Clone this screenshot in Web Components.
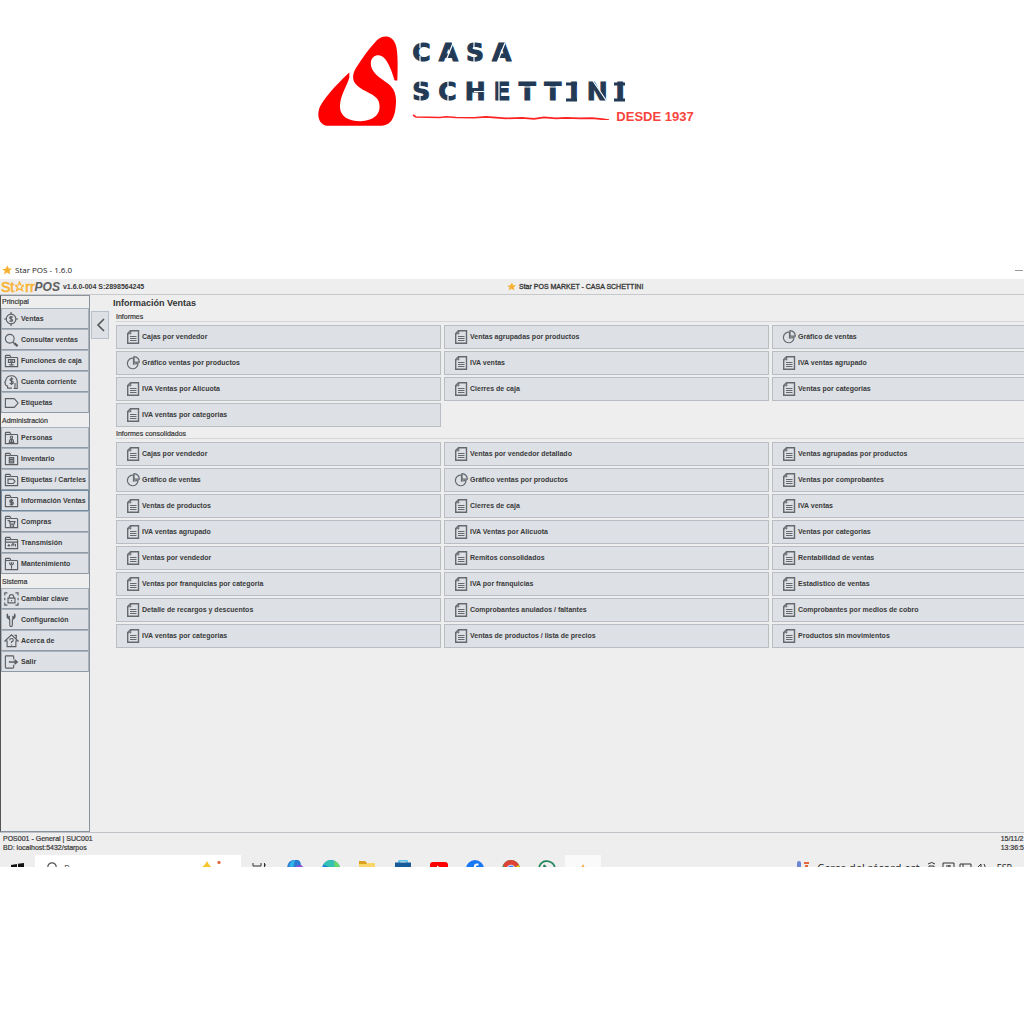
<!DOCTYPE html>
<html lang="es">
<head>
<meta charset="utf-8">
<title>Casa Schettini - Star POS</title>
<style>
html,body{margin:0;background:#fff;color:#3a3a3a;font:700 7px/10px "Liberation Sans",Arial,sans-serif}
body{overflow-x:hidden}
</style>
</head>
<body>
<brand-header></brand-header>
<pos-window>
  <pos-sidebar slot="side">
    <side-group label="Principal">
      <side-item icon="sale">Ventas</side-item>
      <side-item icon="search">Consultar ventas</side-item>
      <side-item icon="cash">Funciones de caja</side-item>
      <side-item icon="account">Cuenta corriente</side-item>
      <side-item icon="tag">Etiquetas</side-item>
    </side-group>
    <side-group label="Administración">
      <side-item icon="person">Personas</side-item>
      <side-item icon="stock">Inventario</side-item>
      <side-item icon="label">Etiquetas / Carteles</side-item>
      <side-item icon="money" current>Información Ventas</side-item>
      <side-item icon="cart">Compras</side-item>
      <side-item icon="send">Transmisión</side-item>
      <side-item icon="tool">Mantenimiento</side-item>
    </side-group>
    <side-group label="Sistema">
      <side-item icon="lock">Cambiar clave</side-item>
      <side-item icon="wrench">Configuración</side-item>
      <side-item icon="about">Acerca de</side-item>
      <side-item icon="exit">Salir</side-item>
    </side-group>
  </pos-sidebar>
  <report-group label="Informes">
    <report-tile>Cajas por vendedor</report-tile>
    <report-tile>Ventas agrupadas por productos</report-tile>
    <report-tile icon="pie">Gráfico de ventas</report-tile>
    <report-tile icon="pie">Gráfico ventas por productos</report-tile>
    <report-tile>IVA ventas</report-tile>
    <report-tile>IVA ventas agrupado</report-tile>
    <report-tile>IVA Ventas por Alicuota</report-tile>
    <report-tile>Cierres de caja</report-tile>
    <report-tile>Ventas por categorias</report-tile>
    <report-tile>IVA ventas por categorias</report-tile>
  </report-group>
  <report-group label="Informes consolidados">
    <report-tile>Cajas por vendedor</report-tile>
    <report-tile>Ventas por vendedor detallado</report-tile>
    <report-tile>Ventas agrupadas por productos</report-tile>
    <report-tile icon="pie">Gráfico de ventas</report-tile>
    <report-tile icon="pie">Gráfico ventas por productos</report-tile>
    <report-tile>Ventas por comprobantes</report-tile>
    <report-tile>Ventas de productos</report-tile>
    <report-tile>Cierres de caja</report-tile>
    <report-tile>IVA ventas</report-tile>
    <report-tile>IVA ventas agrupado</report-tile>
    <report-tile>IVA Ventas por Alicuota</report-tile>
    <report-tile>Ventas por categorias</report-tile>
    <report-tile>Ventas por vendedor</report-tile>
    <report-tile>Remitos consolidados</report-tile>
    <report-tile>Rentabilidad de ventas</report-tile>
    <report-tile>Ventas por franquicias por categoria</report-tile>
    <report-tile>IVA por franquicias</report-tile>
    <report-tile>Estadistico de ventas</report-tile>
    <report-tile>Detalle de recargos y descuentos</report-tile>
    <report-tile>Comprobantes anulados / faltantes</report-tile>
    <report-tile>Comprobantes por medios de cobro</report-tile>
    <report-tile>IVA ventas por categorias</report-tile>
    <report-tile>Ventas de productos / lista de precios</report-tile>
    <report-tile>Productos sin movimientos</report-tile>
  </report-group>
</pos-window>
<task-bar></task-bar>

<script>
const STAR = '<svg class="star" viewBox="0 0 20 20" width="10" height="10" aria-hidden="true"><path fill="#f7b030" d="M11 1l2.500 6H20l-5 4.500 1.500 7L10 15l-6.500 4L6 12 0 8.500l7-1z"/></svg>';
const folder = inner => '<path d="M1.500 14.500V2.500q0-1 1-1h4l1.500 2.500h6.500q1 0 1 1v9.500z"/><path d="M1.500 4h6"/>' + inner;
/* All menu glyphs are drawn on a 17 x 16 grid. */
const ICONS = {
  sale: '<circle cx="8" cy="8" r="5.500"/><path d="M8 0v3M8 13v3M0 8h3M13 8h3M10 6.200Q8 4.500 6.500 6 6.200 7.500 8 8t1.800 1.600Q9 11.500 6.200 10M8 4.500v7"/>',
  search: '<circle cx="6.500" cy="6.500" r="5"/><path d="M10 10.500l1.500 1.500"/><path stroke-width="2.600" d="M11.500 11.500l4 3.500"/>',
  cash: folder('<path d="M5 6.500h7v3H5zM8.500 9.500v3M6 12.500h5M7 8h3"/>'),
  account: '<path d="M4 15.500v-3Q1 12 1.500 9.500L.8 8.500 2 6Q3 .8 8.500.8T15 7v8.500h-4M4 15h5"/><path d="M10.500 5Q8.500 3 7 4.800 6.500 6.500 8.700 7T10.500 9Q9 11 6.500 9.500M8.600 2.500v9M12.500 9v6"/>',
  tag: '<path d="M1.500 3h9.500q1 0 1.500.8L16 8l-3.500 4.200q-.5.800-1.500.8H1.500z"/>',
  person: folder('<circle cx="8.500" cy="7" r="1.300"/><path d="M6 13q.5-4 2.500-4t2.500 4zM8.500 9v4"/>'),
  stock: folder('<path d="M6 6.500h5v6H6zM6 8.500h5M6 10.500h5"/>'),
  label: folder('<path d="M4.500 7h6l2 2.500-2 2.500h-6z"/>'),
  money: folder('<path stroke-width="1.500" d="M10.500 7.300Q7 6 6.700 8T9 9.500 9.800 12L6.500 11.700M8.500 5.800v7.500"/>'),
  cart: folder('<path d="M4 6.500h2l1 4h4.500l1-3H6.500"/><circle cx="7.500" cy="12.500" r=".5"/><circle cx="10.500" cy="12.500" r=".5"/>'),
  send: folder('<path d="M1.500 7h14M4 11h3M5.500 9v3M9 9v3M9 9h2v2M13 9v3"/>'),
  tool: folder('<path d="M6.500 6v2l2 1.500 2-1.500V6M8.500 9.500v4M8.500 6v2"/>'),
  lock: '<path d="M.8 4V1h3M13 1h3v3M16 12v3h-3M3.800 15h-3v-3M.8 6.500v3M16 6.500v3M4.500 7h8v5.500h-8zM6 7V5q.3-2 2.500-2T11 5v2M8.500 9v1.500"/>',
  wrench: '<path d="M4 .8Q2.500 4 4.500 6l2 1.500v6q0 2 1.500 2t1.500-2v-6l2-1.500Q13.500 4 12 .8V4L10 5.500V3M4 .8V4l2 1.500V3"/>',
  about: '<path d="M3.500 14.500V8H1l7.500-7L16 8h-2.500v6.500zM12 1.500h2V5"/><path d="M6.500 7q0-1.800 2-1.800t2 1.800q0 1-2 2v1.300M8.500 12v1"/>',
  exit: '<path d="M11 5V2q0-1-1-1H2.500q-1 0-1 1v12q0 1 1 1H10q1 0 1-1v-3"/><path stroke-width="1.700" d="M5.500 8H15M12 5.500L15 8l-3 2.500"/>'
};
const define = (name, render) => customElements.define(name, class extends HTMLElement {
  constructor(){ super(); this.attachShadow({mode:'open'}); }
  connectedCallback(){ if(!this.shadowRoot.firstChild) this.shadowRoot.innerHTML = render(this); }
});

define('brand-header', () => `
<style>
:host{display:block;box-sizing:border-box;height:262px;padding:33px 12px 0 0}
.brand{display:flex;justify-content:center;gap:14px}
.mark{margin-top:3px}
.name{position:relative;color:#223a55;font:700 25px/39px "DejaVu Sans",sans-serif;letter-spacing:8px;-webkit-text-stroke:1px #223a55}
.name div{white-space:nowrap}
.cuts{position:absolute;left:0;top:0}
.since{display:flex;align-items:center;gap:6px;height:12px;color:#f8443d;font:700 13px/12px "Liberation Sans",sans-serif}
</style>
<div class="brand">
  <svg class="mark" width="80" height="91" viewBox="50 49 240 272" role="img" aria-label="Casa Schettini"><path fill="#fe0000" d="M144 158C120 180 75 225 56 260C46 284 50 312 76 318H240C276 316 283 280 284 245C284 215 275 200 250 184C222 165 205 148 209 124C215 103 238 100 252 118C265 135 273 160 280 182L288 182C289 140 291 95 282 72C274 47 245 42 226 62C205 84 183 115 163 146C152 165 152 184 168 198C187 216 222 222 232 244C242 276 225 302 178 304C137 304 114 287 116 256C118 222 139 195 144 172Z"/></svg>
  <div>
    <div class="name"><div>CASA</div><div>SCHETTINI</div>
      <svg class="cuts" width="216" height="78" viewBox="0 0 216 78" fill="none" aria-hidden="true">
        <path stroke="#223a55" stroke-width="3" d="M154 51h11M154 67h11M202 51h11M202 67h11"/>
        <path stroke="#fff" stroke-width="1.200" d="M8 8v7M8 23v7M33 30l8-20M62 8v8M62 23v7M85 30l8-20M8 47v8M8 62v8M36 47v7M36 63v7M62 58.500h10M87 47v24M107 54h20M132 54h20M181 48l15 22"/></svg>
    </div>
    <div class="since">
      <svg width="198" height="6" viewBox="0 0 198 6" aria-hidden="true"><path fill="none" stroke="#f22" stroke-width="1.600" d="M1 1l3 2 24 .5 6-.8 10 .8 18 .2 12-.8 20 1.500 16-.5 12 1 10-1.500 12 1 10-.5 14 .5 12-.3 10 1 7 .9"/></svg>
      <span>DESDE 1937</span>
    </div>
  </div>
</div>`);

define('pos-window', () => `
<style>
:host{display:block}
.title{box-sizing:border-box;display:flex;align-items:center;gap:3px;height:17px;padding:0 1px 1px 2px;background:#fff;color:#222;font:400 8px/12px "Open Sans","Noto Sans",sans-serif}
.min{margin-left:auto;width:8px;height:10px;border:0;padding:0;background:linear-gradient(#999,#999) center/8px 1px no-repeat}
.app{background:#eee}
header{display:grid;grid-template-columns:507px 1fr;align-items:center;height:15px;border-bottom:1px solid #c5c9cb}
.left,.center{display:flex;align-items:center}
.left{gap:3px}.center{gap:3px;font-weight:400;-webkit-text-stroke:.3px #333}
.center .star{width:9px;height:9px;-webkit-text-stroke:0}
.logo{display:flex;align-items:center;font:italic 700 12px/14px "Liberation Sans",sans-serif;color:#5b5d60;padding-left:1px}
.logo i{color:#f9b233;font-weight:400;font-style:normal;-webkit-text-stroke:.6px #f9b233;font-size:14px}
.logo svg{margin:0 1px}
.body{display:flex;height:537px}
main{flex:1;min-width:0;overflow:hidden;display:flex;flex-direction:column;padding-top:2px}
h1{margin:0 0 3px 4px;font:700 9px/12px "Liberation Sans",sans-serif;color:#333}
.toggle{flex:none;width:18px;height:28px;margin:16px 0 0 1px;padding:0;border:1px solid #b6c0ca;background:#dde1e6;display:grid;place-items:center}
.reports{padding-left:7px}
footer{display:flex;justify-content:space-between;height:22px;border-top:1px solid #bfc2c6;font-weight:400;line-height:9px;-webkit-text-stroke:.2px #333}
footer div{padding:1px 0 0 3px}
footer .clock{padding-left:0;white-space:nowrap}
</style>
<div class="title">${STAR}<span>Star POS - 1.6.0</span><button class="min" aria-label="Minimizar"></button></div>
<div class="app">
  <header>
    <div class="left"><span class="logo"><i>St</i><svg width="9" height="11" viewBox="0 0 18 22" aria-hidden="true"><path fill="none" stroke="#f9b233" stroke-width="2.500" d="M9 2l2.500 6 6 .5-4.500 4.500 2 6-6-3.500L3 19l2-6L.8 8.500l6-.5z"/></svg><i>rr</i>POS</span><span>v1.6.0-004 S:2898564245</span></div>
    <div class="center">${STAR}<span>Star POS MARKET - CASA SCHETTINI</span></div>
  </header>
  <div class="body">
    <slot name="side"></slot>
    <button class="toggle" aria-label="Ocultar menú"><svg width="9" height="14" viewBox="0 0 9 14"><path d="M8 1L2 7l6 6" fill="none" stroke="#555" stroke-width="1.600"/></svg></button>
    <main><h1>Información Ventas</h1><div class="reports"><slot></slot></div></main>
  </div>
  <footer><div>POS001 - General | SUC001<br>BD: localhost:5432/starpos</div><div class="clock">15/11/2<br>13:36:5</div></footer>
</div>`);

define('pos-sidebar', () => `
<style>:host{display:block;box-sizing:border-box;flex:none;width:90px;border:1px solid #8c9299;border-left-color:#555}nav{margin-top:-2px}</style><nav><slot></slot></nav>`);

define('side-group', el => `
<style>:host{display:block}h2{margin:0;padding:1px 0 0 1px;font:400 7px/13px "Liberation Sans",sans-serif;-webkit-text-stroke:.2px #333}</style>
<h2>${el.getAttribute('label')}</h2><slot></slot>`);

define('side-item', el => `
<style>
:host{display:block;height:21px}
button{display:flex;align-items:center;gap:2px;box-sizing:border-box;width:100%;height:21px;padding:0 0 0 2px;border:1px solid #a8b3bd;border-bottom-color:#8f9aa5;background:#dde1e6;color:inherit;font:inherit;text-align:left;white-space:nowrap}
:host([current]) button{border-color:#6f8ba5}
svg{flex:none}
</style>
<button><svg width="15" height="14" viewBox="0 0 17 16" fill="none" stroke="#5b5e62" stroke-width="1.300" aria-hidden="true">${ICONS[el.getAttribute('icon')]}</svg><span><slot></slot></span></button>`);

define('report-group', el => `
<style>
:host{display:block}
h2{margin:0 0 3px;border-bottom:1px solid #d5d6d8;font:400 7px/9px "Liberation Sans",sans-serif;-webkit-text-stroke:.2px #333}
.grid{display:grid;grid-template-columns:repeat(3,minmax(325px,1fr));gap:2px 3px;padding-bottom:2px}
</style>
<section><h2>${el.getAttribute('label')}</h2><div class="grid"><slot></slot></div></section>`);

define('report-tile', el => `
<style>
:host{display:block}
button{display:flex;align-items:center;gap:2px;box-sizing:border-box;width:100%;height:24px;padding:0 0 0 9px;border:1px solid #b9bec5;background:#dde1e6;color:inherit;font:inherit;text-align:left;white-space:nowrap}
</style>
<button>${el.getAttribute('icon') === 'pie'
 ? '<svg width="14" height="14" viewBox="0 0 14 14" fill="none" stroke="#666a6e" stroke-width="1.200" aria-hidden="true"><path d="M7.500 2.200A5.300 5.300 0 1 0 12 7.500L7.500 8z"/><path d="M8 .7v5.500h5.400Q13 1.200 8 .7z"/></svg>'
 : '<svg width="14" height="14" viewBox="0 0 14 14" fill="none" stroke="#666a6e" stroke-width="1.400" aria-hidden="true"><path d="M4.500.7h8v12.600H1.700V3.500z"/><path stroke-width="1.100" d="M4.700 1v2.700H2M4 6.500h6.500M4 8.500h6.500M4 10.500h6.500"/></svg>'}<span><slot></slot></span></button>`);

define('task-bar', () => `
<style>
:host{display:flex;height:12px;overflow:hidden;background:#eee;color:#222;font:400 10px/14px "Open Sans","Noto Sans",sans-serif}
a{flex:none;width:36px;height:28px;padding-top:5px;box-sizing:border-box;display:flex;justify-content:center}
a.win{width:35px;padding-top:8px}
a.on{background:#fafafa}
label{flex:none;display:flex;align-items:flex-start;gap:5px;width:206px;height:30px;background:#fff;box-sizing:border-box;padding:6px 16px 0 11px}
input{flex:1;min-width:0;border:0;padding:2px 0 0;background:none;font:400 9px/12px "Open Sans",sans-serif;color:#555;outline:0}
input::placeholder{color:#555;opacity:1}
.tray{margin-left:auto;display:flex;align-items:flex-start;gap:7px;padding:6px 12px 0 0;white-space:nowrap}
.tray .news{font-size:11px}
.tray .lang{font-size:9px}
</style>
<a class="win" href="#" aria-label="Inicio"><svg width="13" height="13" viewBox="0 0 13 13"><path fill="#111" d="M0 2l6-1v5H0zM7 .8L13 0v6H7zM0 7h6v5l-6-1zM7 7h6v6l-6-1z"/></svg></a>
<label aria-label="Buscar"><svg width="13" height="14" viewBox="0 0 13 14" fill="none" stroke="#555" stroke-width="1.200"><circle cx="6" cy="6" r="4.200"/><path d="M4 9l-3 4"/></svg><input type="text" placeholder="Buscar"><svg width="28" height="18" viewBox="0 0 28 18"><path fill="#f8c62f" d="M10 0Q12 5 17 8l-7 8-8-8q6-3 8-8z"/><circle cx="22" cy="1.500" r="1.600" fill="#e3673a"/></svg></label>
<a href="#" aria-label="Vista de tareas"><svg width="14" height="18" viewBox="0 0 14 18" fill="none" stroke="#333"><path d="M1 3v3h8V3M1 7.500h8v7H1zM12.500 3v12M12 5h2"/></svg></a>
<a href="#" aria-label="Copilot"><svg width="18" height="18" viewBox="0 0 18 18"><path fill="#2b7cd3" d="M1 8Q2 0 8 0h4q3 1 3 6L9 16z"/><path fill="#30b5e8" d="M3 6q2-6 6-6L7 8z"/><path fill="#8a50d8" d="M11 5h4q3 1 2 6l-5 5-5-1z"/></svg></a>
<a href="#" aria-label="Edge"><svg width="18" height="18" viewBox="0 0 18 18"><circle cx="9" cy="9" r="9" fill="#1683d8"/><path fill="#35c1b1" d="M1 5Q4 0 9 0q8 1 9 9H9Q5 5 1 5z"/><path fill="#6bd96a" d="M12 .5Q18 3 18 9h-5z"/></svg></a>
<a href="#" aria-label="Explorador"><svg width="18" height="18" viewBox="0 0 18 18"><path fill="#dba21f" d="M1 1h6l2 2v3H1z"/><path fill="#f9d66a" d="M1 4h7l2-1h7v13H1z"/></svg></a>
<a href="#" aria-label="Tienda"><svg width="18" height="18" viewBox="0 0 18 18"><path fill="none" stroke="#35b4e8" stroke-width="1.300" d="M5 3V.8h8V3"/><path fill="#165b99" d="M1 2.500h16V16H1z"/></svg></a>
<a href="#" aria-label="YouTube"><svg width="18" height="18" viewBox="0 0 18 18"><rect y="2" width="18" height="13" rx="3" fill="#f00"/><path fill="#fff" d="M7 5.500l5 3-5 3z"/></svg></a>
<a href="#" aria-label="Facebook"><svg width="18" height="18" viewBox="0 0 18 18"><circle cx="9" cy="9" r="9" fill="#1877f2"/><path d="M12.500 4.500H11q-2 0-2 2V18M6.500 9h5.500" stroke="#fff" stroke-width="2.200" fill="none"/></svg></a>
<a href="#" aria-label="Chrome"><svg width="18" height="18" viewBox="0 0 18 18"><circle cx="9" cy="9" r="9" fill="#34a853"/><path fill="#dc4437" d="M1 5Q4 0 9 0t8 5l-8 4-4 2z"/><path fill="#fbbc05" d="M17 5q3 8-5 13l-2-9z"/><circle cx="9" cy="9" r="4.300" fill="#fff"/><circle cx="9" cy="9" r="3.400" fill="#4285f4"/></svg></a>
<a href="#" aria-label="WhatsApp"><svg width="18" height="18" viewBox="0 0 18 18" fill="none" stroke="#24845c" stroke-width="1.700"><path d="M1 17l1-4a8 8 0 1 1 3 3z"/><path d="M6 5q0 5 6 7l1-2-2-1M6 5l2 2"/></svg></a>
<a class="on" href="#" aria-label="Star POS"><svg width="14" height="16" viewBox="0 0 14 16"><path fill="#f2ac45" d="M7 4l2 4h5l-4 3 1 5-4-3-4 3 1-5-4-3h5z"/></svg></a>
<div class="tray">
  <svg width="14" height="16" viewBox="0 0 14 16"><rect x="1" width="4" height="12" rx="2" fill="#6d87d8"/><path fill="#e4683c" d="M8 1h5v2H8zM9 4h3v2H9z"/></svg>
  <span class="news">Cerca del récord est</span>
  <svg width="63" height="12" viewBox="0 0 63 12" fill="none" stroke="#333" aria-hidden="true"><path d="M1 3q4-3 7 0M2 5h5v5H2zM16 2h11v8H16zM19 5h5M22 4v4M33 3h11v7H33zM36 3v7M51 6l3-3v7M57 3q2 2 0 5"/></svg>
  <span class="lang">ESP</span>
</div>`);
</script>
</body>
</html>
